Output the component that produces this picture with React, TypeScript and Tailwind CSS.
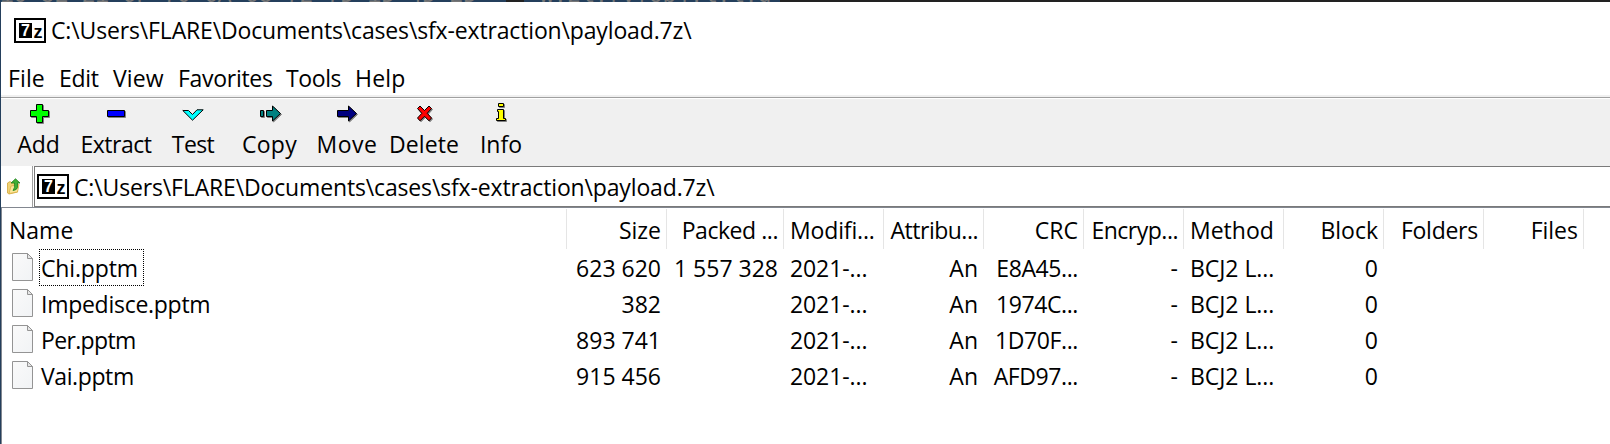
import type { ReactNode } from "react";

const PATH = "C:\\Users\\FLARE\\Documents\\cases\\sfx-extraction\\payload.7z\\";

function ArchiveIcon() {
  return (
    <svg width="32" height="25" viewBox="0 0 32 25" className="shrink-0">
      <rect x="1" y="1" width="30" height="23" fill="#fff" stroke="#000" strokeWidth="2" />
      <rect x="5" y="5" width="13" height="15" fill="#000" />
      <text x="7" y="18" fontFamily="Liberation Sans" fontWeight="700" fontSize="16" fill="#fff">7</text>
      <text x="19.6" y="20" fontFamily="Liberation Sans" fontWeight="700" fontSize="18" fill="#000">z</text>
    </svg>
  );
}

function FileIcon() {
  return (
    <svg width="21" height="28" viewBox="0 0 21 28" className="shrink-0">
      <defs>
        <linearGradient id="sheet" x1="0" y1="0" x2="1" y2="1">
          <stop offset="0" stopColor="#fafafa" />
          <stop offset="1" stopColor="#f1f3f5" />
        </linearGradient>
      </defs>
      <path d="M.5 .5H15.5L20.5 5.5V27.5H.5Z" fill="url(#sheet)" stroke="#949494" />
      <path d="M15.5 .5V5.5H20.5Z" fill="#e6e6e6" stroke="#949494" />
    </svg>
  );
}

function UpIcon() {
  return (
    <svg width="14" height="17" viewBox="0 0 14 17">
      <path d="M.5 5 3 3.5 5 5 10.5 4.5V14L2 16 .5 15Z" fill="#f0d274" stroke="#d2a63a" strokeWidth=".8" />
      <path d="M2 15.5 4 8 12 6.5 10.5 14Z" fill="#fbe79b" stroke="#dbb044" strokeWidth=".8" />
      <path d="M4 5 8.5.8 13 5H10.5V9.5Q10 12 6 12.5 8 10.5 7.5 5Z" fill="#3fae35" stroke="#21801e" strokeWidth=".8" />
    </svg>
  );
}

const shapes: Record<string, { d: string; fill: string }> = {
  Add: { d: "M8.5 2.5H14.5V8.5H20.5V14.5H14.5V20.5H8.5V14.5H2.5V8.5H8.5Z", fill: "#00ff00" },
  Extract: { d: "M2.5 8.5H19.5V14.5H2.5Z", fill: "#0000ff" },
  Test: { d: "M.8 8.5H6.5L10.5 12.5 15 7.8H21.2L10.5 18.2Z", fill: "#00ffff" },
  Copy: { d: "M1.5 8.5H4.5V14.5H1.5ZM7.5 8.5H13.5V4L21.5 11.5 13.5 19V14.5H7.5Z", fill: "#008080" },
  Move: { d: "M1.5 8.5H12.5V4L20.5 11.5 12.5 19V14.5H1.5Z", fill: "#000080" },
  Delete: { d: "M4.5 6.5 7 4 11.5 8.5 16 4 18.5 6.5 14.2 11.3 18.5 16 16 18.8 11.5 14.3 7 18.8 4.5 16 8.8 11.3Z", fill: "#ff0000" },
  Info: { d: "M8.5 1.5H13.5V4.5H8.5ZM7.5 7.5H13.5V16.5H15.5V18.5H6.5V16.5H8.5V9.5H7.5Z", fill: "#ffff00" },
};

function ToolIcon({ name }: { name: string }) {
  const { d, fill } = shapes[name];
  return (
    <svg width="23" height="23" viewBox="0 0 23 23">
      {name !== "Test" && <path d={d} fill="#808080" stroke="#808080" transform="translate(1 1)" />}
      <path d={d} fill={fill} stroke="#000" />
    </svg>
  );
}

const menu = [
  { label: "File", cls: "w-[51px] tracking-[0.1px]" },
  { label: "Edit", cls: "w-[54px] tracking-[-0.3px]" },
  { label: "View", cls: "w-[65px] tracking-[0.1px]" },
  { label: "Favorites", cls: "w-[108px] tracking-[-0.3px]" },
  { label: "Tools", cls: "w-[69px] tracking-[-0.4px]" },
  { label: "Help", cls: "tracking-[0.2px]" },
];

const tools = [
  { label: "Add", cls: "pr-[2px]" },
  { label: "Extract", cls: "pr-px tracking-[-0.5px]" },
  { label: "Test", cls: "pr-px tracking-[-0.6px]" },
  { label: "Copy", cls: "pr-[2px] tracking-[0.3px]" },
  { label: "Move", cls: "pr-px tracking-[0.5px]" },
  { label: "Delete", cls: "pr-px tracking-[0.1px]" },
  { label: "Info", cls: "pr-px" },
];

const GRID =
  "grid grid-cols-[565px_100px_117px_100px_100px_100px_100px_100px_100px_100px_100px]";

const headers = [
  { label: "Name", cls: "pl-[7px] justify-start" },
  { label: "Size", cls: "justify-end" },
  { label: "Packed ...", cls: "justify-end tracking-[-0.45px]" },
  { label: "Modifi...", cls: "justify-start pl-[6px] tracking-[-0.15px]" },
  { label: "Attribu...", cls: "justify-end tracking-[-0.5px]" },
  { label: "CRC", cls: "justify-end" },
  { label: "Encryp...", cls: "justify-end tracking-[-0.5px]" },
  { label: "Method", cls: "justify-start pl-[6px]" },
  { label: "Block", cls: "justify-end" },
  { label: "Folders", cls: "justify-end tracking-[-0.25px]" },
  { label: "Files", cls: "justify-end" },
];

const files = [
  { name: "Chi.pptm", cls: "tracking-[-0.15px]", size: "623 620", packed: "1 557 328", crc: "E8A45..." },
  { name: "Impedisce.pptm", cls: "tracking-[-0.27px]", size: "382", packed: "", crc: "1974C..." },
  { name: "Per.pptm", cls: "tracking-[-0.65px]", size: "893 741", packed: "", crc: "1D70F..." },
  { name: "Vai.pptm", cls: "tracking-[-0.4px]", size: "915 456", packed: "", crc: "AFD97..." },
];

function Right({ children, cls = "" }: { children?: ReactNode; cls?: string }) {
  return <div className={`whitespace-nowrap pr-[6px] text-right ${cls}`}>{children}</div>;
}

export default function App() {
  return (
    <div className="flex h-[444px] w-[1610px] flex-col overflow-hidden bg-white font-['Open_Sans',sans-serif] text-[23px] leading-[36px] text-black">
      <div className="flex h-[2px] shrink-0 overflow-hidden bg-[#222] font-['Liberation_Mono',monospace] text-[22.7px] whitespace-pre text-[#777]">
        <div className="flex w-[506px] items-end bg-[#243f5c]">
          <span className="leading-[12px]">10 5E 21 6F 70 6A 68 72 7D 1D 4D ED</span>
        </div>
        <div className="ml-[18px] flex w-[256px] items-end bg-[#243f5c] pl-[16px]">
          <span className="leading-[12px]">w.zl.[v{"{"}obj.l.l.g</span>
        </div>
      </div>

      <div className="flex grow flex-col border-l border-[#243f5c]">
        <div className="flex h-[56px] shrink-0 items-center pl-[13px]">
          <ArchiveIcon />
          <span className="ml-[5px] tracking-[-0.15px]">{PATH}</span>
        </div>

        <div className="flex h-[37px] shrink-0 items-center pt-[3px] pl-[7px]">
          {menu.map((m) => (
            <div key={m.label} className={m.cls}>{m.label}</div>
          ))}
        </div>

        <div className="h-[2px] shrink-0 bg-[#f0f0f0]" />
        <div className="h-px shrink-0 bg-[#a0a0a0]" />
        <div className="h-px shrink-0 bg-white" />

        <div className="flex h-[67px] shrink-0 bg-[#f0f0f0] pt-[3px]">
          {tools.map((t) => (
            <div key={t.label} className="flex w-[77px] flex-col items-center">
              <ToolIcon name={t.label} />
              <span className={`mt-px ${t.cls}`}>{t.label}</span>
            </div>
          ))}
        </div>

        <div className="flex h-[41px] shrink-0">
          <div className="flex w-[32px] items-center border-r border-[#a0a0a0] pl-[6px]">
            <UpIcon />
          </div>
          <div className="ml-px flex grow items-center border-t border-b border-l border-[#7a7a7a] pl-[2px]">
            <ArchiveIcon />
            <span className="ml-[5px] tracking-[-0.15px]">{PATH}</span>
          </div>
        </div>

        <div className="grow border-t border-l border-[#828790]">
          <div className={`${GRID} pt-px`}>
            {headers.map((h) => (
              <div
                key={h.label}
                className={`flex h-[40px] items-center border-r border-[#e5e5e5] pr-[5px] pt-[2px] whitespace-nowrap ${h.cls}`}
              >
                {h.label}
              </div>
            ))}
          </div>
          <div className="pt-px">
            {files.map((f, i) => (
              <div key={f.name} className={`${GRID} h-[36px]`}>
                <div className="flex items-start pl-[10px]">
                  <div className="pt-[3px]">
                    <FileIcon />
                  </div>
                  <div
                    className={`-mt-px ml-[6px] h-[37px] w-[105px] border border-dotted pl-px leading-[36px] ${
                      i === 0 ? "border-black" : "border-transparent"
                    } ${f.cls}`}
                  >
                    {f.name}
                  </div>
                </div>
                <Right>{f.size}</Right>
                <Right>{f.packed}</Right>
                <div className="pl-[6px] tracking-[-0.1px]">2021-...</div>
                <Right>An</Right>
                <Right cls="tracking-[-0.4px]">{f.crc}</Right>
                <Right>-</Right>
                <div className="pl-[6px] whitespace-nowrap tracking-[-0.05px]">BCJ2 L...</div>
                <Right>0</Right>
                <Right />
                <Right />
              </div>
            ))}
          </div>
        </div>
      </div>
    </div>
  );
}
